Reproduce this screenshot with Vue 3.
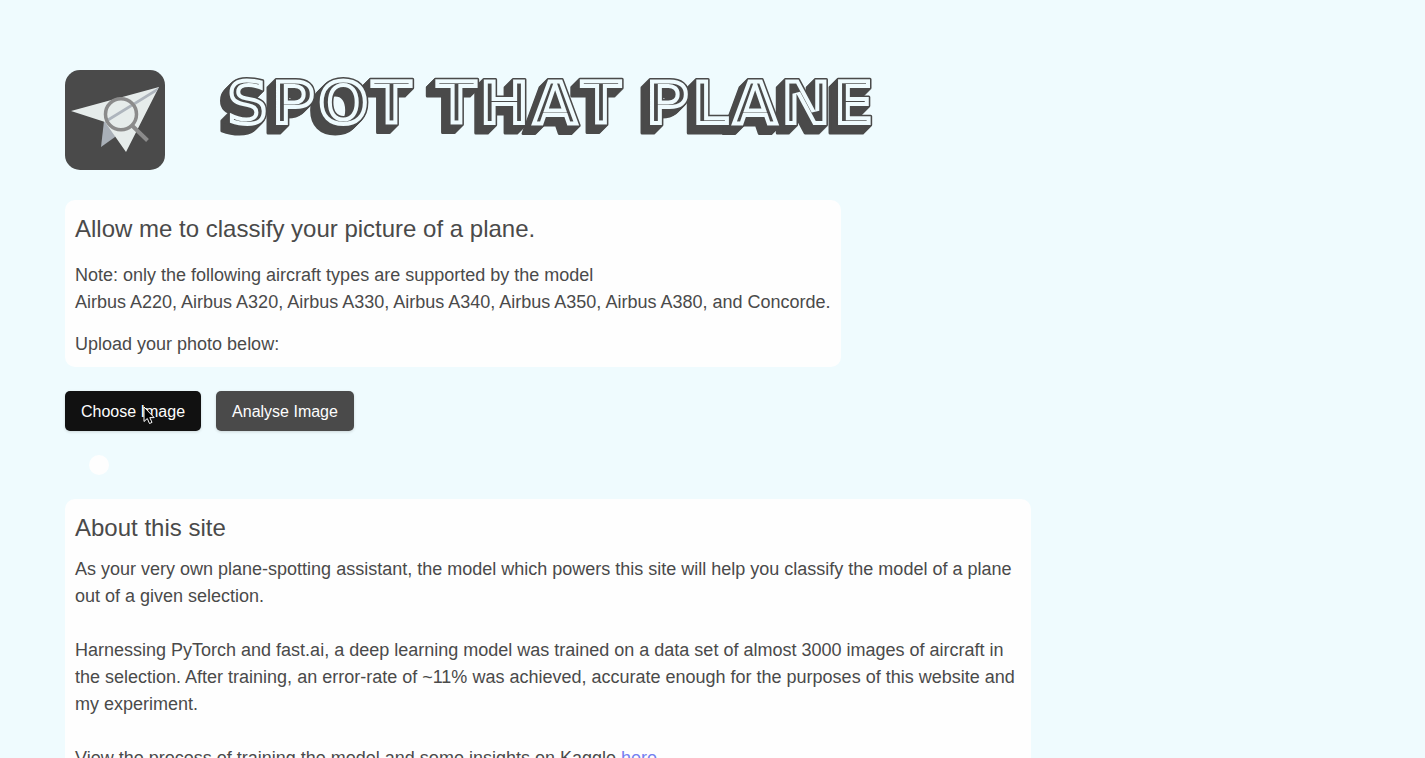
<script setup>
import { ref } from 'vue'

const depth = 8
const picker = ref(null)
const fileName = ref('')

function onPick(event) {
  fileName.value = event.target.files[0]?.name ?? ''
}
</script>

<template>
  <main class="page">
    <header class="masthead">
      <svg class="logo" viewBox="0 0 100 100" aria-hidden="true">
        <rect width="100" height="100" rx="15" fill="#4a4a4a" />
        <path d="M39 51 36 77 50 67 58 50Z" fill="#a9b0b8" />
        <path d="M6 41 94 17 61 82 40 52Z" fill="#e6eceb" />
        <path d="M94 17 41 49.500 40 53.500 91 22Z" fill="#aeb5bd" />
        <circle cx="56" cy="44.300" r="15.500" fill="none" stroke="#8b8b8b" stroke-width="3.500" />
        <path d="M67 55.500 82.500 70.500" stroke="#8b8b8b" stroke-width="4" />
      </svg>
      <h1 class="title">
        <svg class="wordmark" viewBox="0 0 664 70">
          <defs>
            <clipPath id="wordmark-clip">
              <use href="#wordmark-text" />
            </clipPath>
          </defs>
          <g class="extrusion">
            <use v-for="n in depth" :key="n" href="#wordmark-text" :x="-n" :y="n" />
          </g>
          <g class="extrusion">
            <use href="#wordmark-text" />
          </g>
          <g class="face" clip-path="url(#wordmark-clip)">
            <text id="wordmark-text" x="6" y="55">SPOT THAT PLANE</text>
          </g>
        </svg>
      </h1>
    </header>

    <section class="card intro">
      <h2>Allow me to classify your picture of a plane.</h2>
      <p>
        Note: only the following aircraft types are supported by the model<br />
        Airbus A220, Airbus A320, Airbus A330, Airbus A340, Airbus A350, Airbus A380, and Concorde.
      </p>
      <p>Upload your photo below:</p>
    </section>

    <div class="actions">
      <input ref="picker" type="file" accept="image/*" aria-label="Photo" hidden @change="onPick" />
      <button type="button" class="btn active" @click="picker.click()">
        Choose Image
        <svg class="pointer" viewBox="0 0 12 19" aria-hidden="true">
          <path d="M1 1V15.500L4.300 12.500 6.500 17.500 9 16.400 6.800 11.600H11.200Z" fill="#000" stroke="#fff" />
        </svg>
      </button>
      <button type="button" class="btn">Analyse Image</button>
    </div>

    <output class="chosen">{{ fileName }}</output>

    <section class="card about">
      <h2>About this site</h2>
      <p>
        As your very own plane-spotting assistant, the model which powers this site will help you
        classify the model of a plane out of a given selection.
      </p>
      <p>
        Harnessing PyTorch and fast.ai, a deep learning model was trained on a data set of almost
        3000 images of aircraft in the selection. After training, an error-rate of ~11% was
        achieved, accurate enough for the purposes of this website and my experiment.
      </p>
      <p>
        View the process of training the model and some insights on Kaggle <a href="#">here</a>.
      </p>
    </section>
  </main>
</template>

<style>
body {
  margin: 0;
  background: #effbfe;
}
html {
  scrollbar-width: none;
}
</style>

<style scoped>
.page {
  padding: 70px 65px 0;
  font: 18px/27px "Liberation Sans", Arial, sans-serif;
  color: #4a4a4a;
}
.masthead {
  display: flex;
  gap: 54px;
  margin-bottom: 30px;
}
.logo {
  width: 100px;
  height: 100px;
  flex: none;
}
.title {
  margin: 0;
}
.wordmark {
  display: block;
  width: 664px;
  max-width: 100%;
  overflow: visible;
  font: bold 63px "DejaVu Sans", sans-serif;
  font-kerning: none;
}
.extrusion {
  fill: #4a4a4a;
  stroke: #4a4a4a;
  stroke-width: 3px;
  stroke-linejoin: round;
}
.face {
  fill: #4a4a4a;
  stroke: #effbfe;
  stroke-width: 8px;
}
.card {
  box-sizing: border-box;
  padding: 11px 10px 9px;
  border-radius: 10px;
  background: #fefefe;
}
h2 {
  margin: 0;
  font-size: 24px;
  line-height: 36px;
  font-weight: 400;
}
p {
  margin: 0;
}
.intro {
  width: fit-content;
}
.intro p {
  margin-top: 15px;
}
.actions {
  display: flex;
  gap: 15px;
  margin: 24px 0;
}
.btn {
  position: relative;
  padding: 9px 16px 7px;
  border: 0;
  border-radius: 5px;
  background: #4a4a4a;
  color: #fefefe;
  font: 16px/24px "Liberation Sans", Arial, sans-serif;
  box-shadow: 0 1px 3px rgba(0, 0, 0, 0.15);
}
.btn.active {
  background: #111;
}
.pointer {
  position: absolute;
  left: 78px;
  top: 15px;
  width: 12px;
  height: 19px;
}
.chosen {
  display: block;
  width: fit-content;
  margin: 0 24px 24px;
  padding: 10px;
  border-radius: 10px;
  background: #fefefe;
}
.about {
  max-width: 966px;
}
.about p {
  margin-top: 27px;
}
.about h2 + p {
  margin-top: 10px;
}
a {
  color: #7480f0;
  text-decoration: none;
}
</style>
